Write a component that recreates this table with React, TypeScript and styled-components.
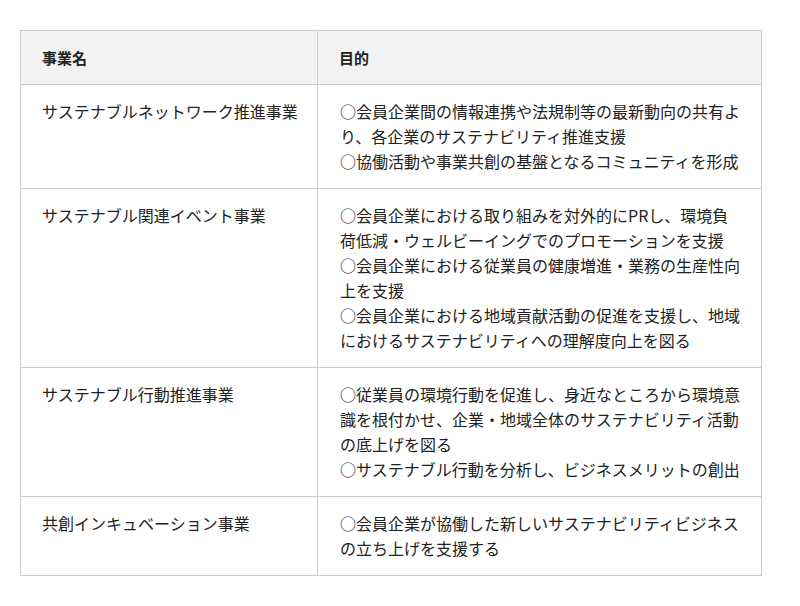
import React from 'react';
import styled, { createGlobalStyle } from 'styled-components';

type Row = {
  name: string;
  purposes: string[];
};

const rows: Row[] = [
  {
    name: 'サステナブルネットワーク推進事業',
    purposes: [
      '○会員企業間の情報連携や法規制等の最新動向の共有より、各企業のサステナビリティ推進支援',
      '○協働活動や事業共創の基盤となるコミュニティを形成',
    ],
  },
  {
    name: 'サステナブル関連イベント事業',
    purposes: [
      '○会員企業における取り組みを対外的にPRし、環境負荷低減・ウェルビーイングでのプロモーションを支援',
      '○会員企業における従業員の健康増進・業務の生産性向上を支援',
      '○会員企業における地域貢献活動の促進を支援し、地域におけるサステナビリティへの理解度向上を図る',
    ],
  },
  {
    name: 'サステナブル行動推進事業',
    purposes: [
      '○従業員の環境行動を促進し、身近なところから環境意識を根付かせ、企業・地域全体のサステナビリティ活動の底上げを図る',
      '○サステナブル行動を分析し、ビジネスメリットの創出',
    ],
  },
  {
    name: '共創インキュベーション事業',
    purposes: ['○会員企業が協働した新しいサステナビリティビジネスの立ち上げを支援する'],
  },
];

const GlobalStyle = createGlobalStyle`
  body {
    margin: 0;
    background: #fff;
    font-family: "Noto Sans CJK JP", "Noto Sans", sans-serif;
    color: #222;
  }
`;

const Page = styled.div`
  padding: 30px 20px;
`;

const Table = styled.table`
  width: 742px;
  border-collapse: collapse;
  table-layout: fixed;
  font-size: 16px;
  line-height: 25px;
`;

const HeadCell = styled.th<{ $width?: number }>`
  box-sizing: border-box;
  width: ${(p) => (p.$width ? `${p.$width}px` : 'auto')};
  background: #f2f2f2;
  border: 1px solid #cccccc;
  padding: 14px 10px 14px 21px;
  text-align: left;
  font-weight: 700;
  font-size: 15px;
`;

const Cell = styled.td<{ $wide?: boolean }>`
  border: 1px solid #cccccc;
  padding: ${(p) => (p.$wide ? '14px 20px 14px 22px' : '14px 10px 14px 21px')};
  vertical-align: top;
  font-size: 16px;
  white-space: ${(p) => (p.$wide ? 'normal' : 'nowrap')};
`;

const Purpose = styled.p`
  margin: 0;
  font-size: 16px;
`;

const App: React.FC = () => {
  return (
    <Page>
      <GlobalStyle />
      <Table>
        <thead>
          <tr>
            <HeadCell $width={297}>事業名</HeadCell>
            <HeadCell>目的</HeadCell>
          </tr>
        </thead>
        <tbody>
          {rows.map((row) => (
            <tr key={row.name}>
              <Cell>{row.name}</Cell>
              <Cell $wide>
                {row.purposes.map((text) => (
                  <Purpose key={text}>{text}</Purpose>
                ))}
              </Cell>
            </tr>
          ))}
        </tbody>
      </Table>
    </Page>
  );
};

export default App;
